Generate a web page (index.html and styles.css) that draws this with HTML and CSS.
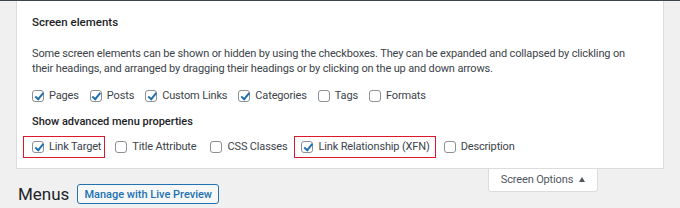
FILE: index.html
```html
<!DOCTYPE html>
<html>
<head>
<meta charset="utf-8">
<link rel="stylesheet" href="styles.css">
</head>
<body>
<div class="topline"></div>
<div class="wrap">
  <div class="panel">
    <h5 class="title">Screen elements</h5>
    <p class="desc">Some screen elements can be shown or hidden by using the checkboxes. They can be expanded and collapsed by clickling on their headings, and arranged by dragging their headings or by clicking on the up and down arrows.</p>
    <div class="row">
      <label class="opt"><span class="cb on"></span>Pages</label>
      <label class="opt"><span class="cb on"></span>Posts</label>
      <label class="opt"><span class="cb on"></span>Custom Links</label>
      <label class="opt"><span class="cb on"></span>Categories</label>
      <label class="opt"><span class="cb"></span>Tags</label>
      <label class="opt"><span class="cb"></span>Formats</label>
    </div>
    <h5 class="subtitle">Show advanced menu properties</h5>
    <div class="row row2">
      <label class="opt mark mark-a"><span class="cb on"></span>Link Target</label>
      <label class="opt"><span class="cb"></span>Title Attribute</label>
      <label class="opt"><span class="cb"></span>CSS Classes</label>
      <label class="opt mark mark-b"><span class="cb on"></span>Link Relationship (XFN)</label>
      <label class="opt"><span class="cb"></span>Description</label>
    </div>
  </div>
  <div class="tab">Screen Options <span class="arrow"></span></div>
  <div class="heading">
    <h1 class="h1">Menus</h1>
    <span class="btn">Manage with Live Preview</span>
  </div>
</div>
</body>
</html>
```
FILE: styles.css
```css
* { box-sizing: border-box; }
html, body { margin: 0; padding: 0; }
body {
  background: #f0f0f1;
  font-family: Roboto, "Liberation Sans", Arial, sans-serif;
  font-size: 11px;
  letter-spacing: -0.15px;
  color: #3c434a;
  width: 680px;
  height: 208px;
  overflow: hidden;
}
.topline { height: 1px; background: #3c434a; }
.wrap { padding: 0 16px; }
.panel {
  background: #fff;
  border: 1px solid #dcdcde;
  border-top: none;
  padding: 14px 15px 14px 15px;
}
.title {
  margin: 0;
  font-size: 11.5px;
  letter-spacing: 0;
  font-weight: 500;
  line-height: 15px;
  color: #1d2327;
}
.desc {
  margin: 16px 0 0;
  line-height: 15px;
  color: #3c434a;
}
.row {
  display: flex;
  gap: 11px;
  align-items: center;
  height: 15px;
  margin-top: 12px;
}
.subtitle {
  margin: 11px 0 0;
  font-size: 11px;
  letter-spacing: 0;
  font-weight: 500;
  line-height: 15px;
  color: #1d2327;
}
.row2 { margin-top: 10px; gap: 14px; }
.opt {
  display: flex;
  align-items: center;
  gap: 5px;
  color: #3c434a;
  white-space: nowrap;
}
.cb {
  width: 12px;
  height: 12px;
  border: 1px solid #8c8f94;
  border-radius: 3px;
  background: #fff;
  position: relative;
  flex: none;
}
.cb.on::after {
  content: "";
  position: absolute;
  left: 3.5px;
  top: 0.5px;
  width: 3px;
  height: 6.5px;
  border: solid #2271b1;
  border-width: 0 2px 2px 0;
  transform: rotate(40deg);
}
.mark {
  border: 1px solid #e0162b;
  height: 22px;
  margin: 0 -4px 0 -9px;
  padding: 0 3px 0 8px;
}
.mark-b { margin: 0 -6px 0 -7px; padding: 0 5px 0 6px; }
.tab {
  float: right;
  margin-right: 66px;
  width: 110px;
  height: 23px;
  padding-bottom: 1px;
  background: #fff;
  border: 1px solid #dcdcde;
  border-top: none;
  border-radius: 0 0 3px 3px;
  color: #50575e;
  display: flex;
  align-items: center;
  justify-content: center;
  gap: 6px;
}
.arrow {
  width: 0; height: 0;
  border-left: 3.5px solid transparent;
  border-right: 3.5px solid transparent;
  border-bottom: 5px solid #50575e;
}
.heading {
  display: flex;
  align-items: center;
  gap: 8px;
  padding-top: 15px;
  padding-left: 2px;
}
.h1 {
  margin: 0;
  font-size: 17px;
  letter-spacing: 0;
  font-weight: 400;
  color: #1d2327;
  line-height: 20px;
}
.btn {
  border: 1px solid #2271b1;
  border-radius: 3px;
  background: #f6f7f7;
  color: #2271b1;
  font-weight: 500;
  font-size: 11px;
  letter-spacing: 0;
  height: 20px;
  padding: 0 6px;
  display: flex;
  align-items: center;
}
```
